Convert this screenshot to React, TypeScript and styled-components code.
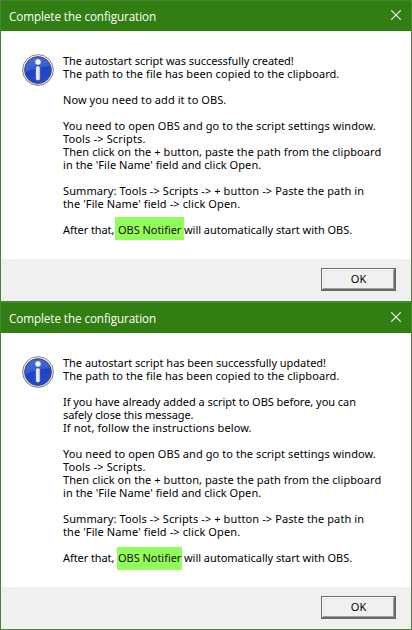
import React, { useId } from 'react';
import styled, { createGlobalStyle, css } from 'styled-components';

const GlobalStyle = createGlobalStyle`
  *, *::before, *::after { box-sizing: border-box; }
  body { margin: 0; background: #fff; overflow: hidden; }
`;

const Page = styled.main`
  display: flex;
  flex-direction: column;
  width: 412px;
  height: 630px;
  font-family: 'Noto Sans', 'Open Sans', sans-serif;
  font-size: 11px;
  line-height: 13px;
  color: #000;
`;

const Dialog = styled.section<{ $height: number; $open?: boolean }>`
  display: flex;
  flex-direction: column;
  height: ${(p) => p.$height}px;
  border: 1px solid #43882a;
  border-bottom-width: ${(p) => (p.$open ? 0 : 1)}px;
`;

const TitleBar = styled.header<{ $height: number }>`
  display: flex;
  flex: none;
  align-items: flex-end;
  justify-content: space-between;
  height: ${(p) => p.$height}px;
  padding: 0 9px 6px 8px;
  background: #317e12;
  ${(p) => p.$height > 30 && css`border-top: 1px solid #43882a;`}
`;

const Title = styled.h1`
  margin: 0;
  font: 400 11.7px/18px 'Open Sans', 'Noto Sans', sans-serif;
  letter-spacing: -0.09px;
  color: #fff;
`;

const CloseButton = styled.button`
  display: flex;
  margin: 0 0 4px;
  padding: 0;
  border: 0;
  background: none;
`;

const Content = styled.div`
  display: flex;
  flex: 1;
  gap: 9px;
  padding: 23px 0 0 21px;
  background: #fff;
`;

const Message = styled.div`
  display: flex;
  flex-direction: column;
  gap: 13px;
`;

const Paragraph = styled.div`
  display: flex;
  flex-direction: column;
`;

const Line = styled.span<{ $tracking: number }>`
  letter-spacing: ${(p) => p.$tracking}px;
  white-space: pre;
`;

const Sentence = styled.div`
  display: grid;
  grid-template-columns: 55px 66px auto;
`;

const Marked = styled(Line)<{ $bleed: [number, number]; $top: number }>`
  position: relative;
  z-index: 0;
  color: #230808;

  &::before {
    content: '';
    position: absolute;
    z-index: -1;
    top: ${(p) => p.$top}px;
    left: -${(p) => p.$bleed[0]}px;
    width: ${(p) => p.$bleed[1]}px;
    height: 23px;
    background: #90ff5c;
  }
`;

const Footer = styled.footer<{ $height: number }>`
  display: flex;
  flex: none;
  align-items: flex-start;
  justify-content: flex-end;
  height: ${(p) => p.$height}px;
  padding: 9px 15px 0 0;
  background: #f0f0f0;
`;

const OkButton = styled.button`
  width: 75px;
  height: 23px;
  padding: 0 0 1px 1px;
  border: 1px solid #696969;
  border-right-width: 2px;
  border-bottom-width: 2px;
  background: #f0f0f0;
  box-shadow: inset 1px 1px #fff, inset -1px -1px #a0a0a0, inset 2px 2px #e3e3e3;
  font: inherit;
  color: #000;
`;

type TextLine = [text: string, tracking: number];

interface DialogData {
  height: number;
  titleHeight: number;
  footerHeight: number;
  open?: boolean;
  bleed: [number, number];
  markTop: number;
  intro: TextLine[][];
}

const created: DialogData = {
  height: 301,
  titleHeight: 30,
  footerHeight: 42,
  open: true,
  bleed: [3, 69],
  markTop: -6,
  intro: [
    [
      ['The autostart script was successfully created!', -0.045],
      ['The path to the file has been copied to the clipboard.', 0.075],
    ],
    [['Now you need to add it to OBS.', 0.08]],
  ],
};

const updated: DialogData = {
  height: 329,
  titleHeight: 31,
  footerHeight: 42,
  bleed: [1, 65],
  markTop: -4,
  intro: [
    [
      ['The autostart script has been successfully updated!', -0.025],
      ['The path to the file has been copied to the clipboard.', 0.075],
    ],
    [
      ['If you have already added a script to OBS before, you can', -0.035],
      ['safely close this message.', -0.085],
      ['If not, follow the instructions below.', 0.1],
    ],
  ],
};

const instructions: TextLine[][] = [
  [
    ['You need to open OBS and go to the script settings window.', 0.075],
    ['Tools -> Scripts.', 0.15],
    ['Then click on the + button, paste the path from the clipboard', 0.078],
    ["in the 'File Name' field and click Open.", 0.065],
  ],
  [
    ['Summary: Tools -> Scripts -> + button -> Paste the path in', 0.108],
    ["the 'File Name' field -> click Open.", 0.11],
  ],
];

function CloseIcon() {
  return (
    <svg width="12" height="12" viewBox="0 0 12 12" aria-hidden="true">
      <path d="M1.3 1.3 10.7 10.7M10.7 1.3 1.3 10.7" stroke="#fff" strokeWidth="1.15" />
    </svg>
  );
}

function InfoIcon() {
  const id = useId();
  const ring = `${id}ring`;
  const blue = `${id}blue`;
  const stem = `${id}stem`;
  return (
    <svg width="32" height="32" viewBox="0 0 32 32" aria-hidden="true">
      <defs>
        <linearGradient id={ring} x1="0" y1="0" x2="0" y2="1">
          <stop offset="0" stopColor="#fff" />
          <stop offset="1" stopColor="#d2d2d2" />
        </linearGradient>
        <linearGradient id={blue} x1="0" y1="0" x2="0.3" y2="1">
          <stop offset="0" stopColor="#3565d8" />
          <stop offset="0.5" stopColor="#1c43c0" />
          <stop offset="1" stopColor="#2349d0" />
        </linearGradient>
        <linearGradient id={stem} x1="0" y1="0" x2="1" y2="0">
          <stop offset="0" stopColor="#fff" />
          <stop offset="1" stopColor="#cfcfd2" />
        </linearGradient>
      </defs>
      <circle cx="16" cy="16" r="15.4" fill={`url(#${ring})`} stroke="#858585" strokeWidth="1" />
      <circle cx="16" cy="16" r="13.4" fill={`url(#${blue})`} stroke="#404a6c" strokeWidth="0.9" />
      <path d="M3.3 18.5A13 13 0 0 1 28.3 12C21 12.5 10 15 3.3 18.5Z" fill="#7ba0f2" opacity="0.3" />
      <circle cx="16" cy="8" r="2.7" fill="#fff" />
      <rect x="13.8" y="12" width="4.4" height="14.6" rx="1.8" fill={`url(#${stem})`} stroke="#23377f" strokeWidth="0.4" />
    </svg>
  );
}

function ConfigurationDialog({ data }: { data: DialogData }) {
  return (
    <Dialog $height={data.height} $open={data.open}>
      <TitleBar $height={data.titleHeight}>
        <Title>Complete the configuration</Title>
        <CloseButton aria-label="Close">
          <CloseIcon />
        </CloseButton>
      </TitleBar>
      <Content>
        <InfoIcon />
        <Message>
          {[...data.intro, ...instructions].map((paragraph) => (
            <Paragraph key={paragraph[0][0]}>
              {paragraph.map(([text, tracking]) => (
                <Line key={text} $tracking={tracking}>
                  {text}
                </Line>
              ))}
            </Paragraph>
          ))}
          <Sentence>
            <Line $tracking={-0.08}>After that,</Line>
            <Marked $tracking={-0.04} $bleed={data.bleed} $top={data.markTop}>
              OBS Notifier
            </Marked>
            <Line $tracking={-0.03}>will automatically start with OBS.</Line>
          </Sentence>
        </Message>
      </Content>
      <Footer $height={data.footerHeight}>
        <OkButton>OK</OkButton>
      </Footer>
    </Dialog>
  );
}

export default function App() {
  return (
    <>
      <GlobalStyle />
      <Page>
        <ConfigurationDialog data={created} />
        <ConfigurationDialog data={updated} />
      </Page>
    </>
  );
}
